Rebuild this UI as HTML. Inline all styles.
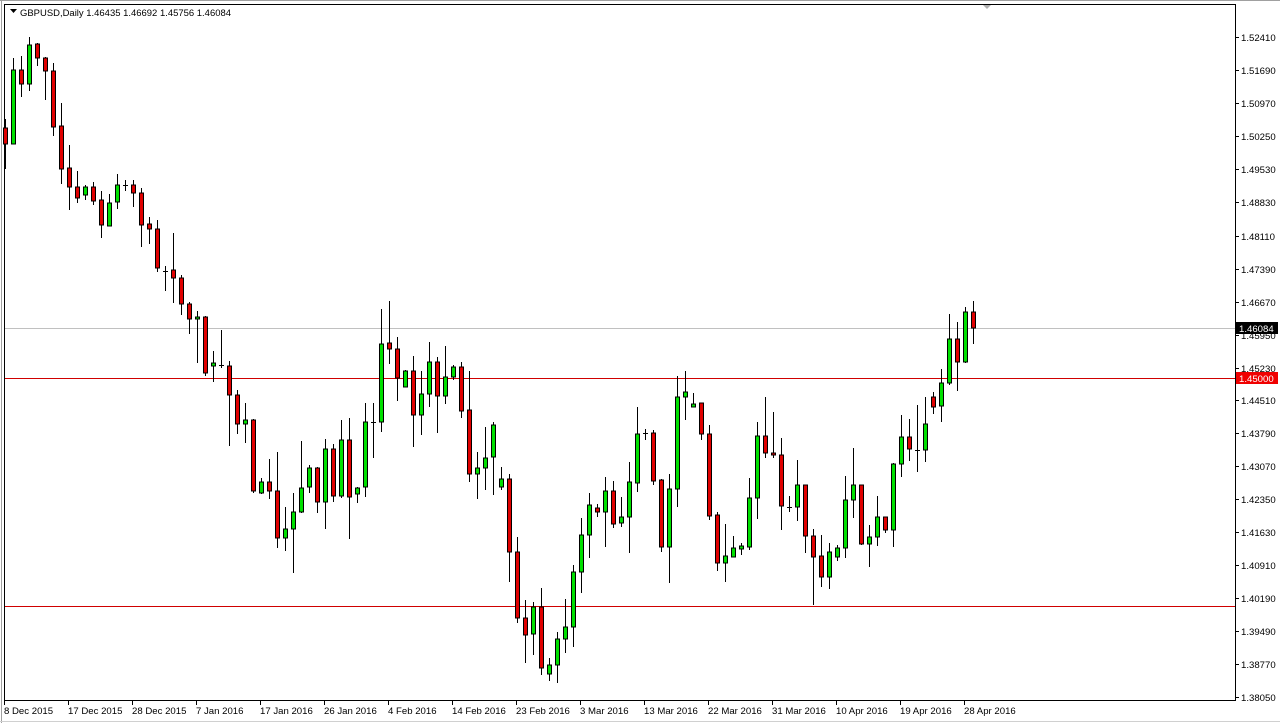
<!DOCTYPE html>
<html><head><meta charset="utf-8"><style>
html,body{margin:0;padding:0;background:#fff;}
svg{display:block;}
text{font-family:"Liberation Sans",sans-serif;font-size:9.6px;fill:#000;}
.g{fill:#00e000;stroke:#000;stroke-width:1}
.r{fill:#e00000;stroke:#000;stroke-width:1}
.d{fill:#000}
</style></head><body>
<svg width="1280" height="723" viewBox="0 0 1280 723" xmlns="http://www.w3.org/2000/svg">
<rect x="0" y="0" width="1280" height="723" fill="#fff"/>
<line x1="1.5" y1="0" x2="1.5" y2="723" stroke="#a0a0a0"/>
<line x1="0" y1="721.5" x2="1280" y2="721.5" stroke="#d0d0d0"/>
<line x1="0" y1="0.5" x2="1280" y2="0.5" stroke="#a0a0a0"/>
<path d="M4.5 4V700.5H1235.5V4.5H4" fill="none" stroke="#000"/>
<path d="M983 5l4 4l4-4z" fill="#b0b0b0"/>
<line x1="5" y1="328.5" x2="1235" y2="328.5" stroke="#c0c0c0"/>
<line x1="5" y1="378.5" x2="1235" y2="378.5" stroke="#d00000"/>
<line x1="5" y1="606.5" x2="1235" y2="606.5" stroke="#d00000"/>
<path d="M10 9h7l-3.5 4z" fill="#000"/>
<text x="20" y="16" textLength="211" lengthAdjust="spacingAndGlyphs">GBPUSD,Daily  1.46435 1.46692 1.45756 1.46084</text>
<path stroke="#000" stroke-width="1" fill="none" d="M5.5 119V169M13.5 58V144M21.5 56V97M29.5 37V91M37.5 43V66M45.5 57V100M53.5 63V136M61.5 103V184M69.5 145V210M77.5 171V203M85.5 185V200M93.5 182V205M101.5 191V238M109.5 194V226M117.5 174V209M125.5 180V191M133.5 180V207M141.5 188V247M149.5 217V244M157.5 220V272M165.5 266V291M173.5 233V303M181.5 275V315M189.5 302V334M197.5 311V363M205.5 316V376M213.5 351V382M221.5 330V368M229.5 361V446M237.5 390V434M245.5 403V443M253.5 419V493M261.5 478V494M269.5 459V499M277.5 452V548M285.5 507V551M293.5 493V573M301.5 441V513M309.5 465V493M317.5 467V513M325.5 439V529M333.5 444V502M341.5 420V498M349.5 418V539M357.5 487V503M365.5 403V497M373.5 403V458M381.5 309V432M389.5 301V364M397.5 337V401M405.5 370V387M413.5 356V447M421.5 371V435M429.5 342V407M437.5 357V433M445.5 346V404M453.5 365V380M461.5 362V418M469.5 371V482M477.5 452V499M485.5 427V490M493.5 422V495M501.5 467V490M509.5 474V582M517.5 537V623M525.5 600V663M533.5 602V655M541.5 588V675M549.5 658V681M557.5 632V683M565.5 599V653M573.5 565V647M581.5 518V593M589.5 493V558M597.5 504V517M605.5 477V547M613.5 481V528M621.5 497V527M629.5 462V553M637.5 407V492M645.5 429V440M653.5 430V485M661.5 479V552M669.5 474V583M677.5 376V507M685.5 371V420M693.5 393V407M701.5 403V440M709.5 425V520M717.5 512V571M725.5 524V582M733.5 536V557M741.5 543V555M749.5 478V550M757.5 422V519M765.5 397V458M773.5 412V458M781.5 438V530M789.5 496V512M797.5 460V521M805.5 485V553M813.5 529V605M821.5 535V587M829.5 543V589M837.5 545V561M845.5 476V558M853.5 448V518M861.5 485V545M869.5 525V567M877.5 496V546M885.5 517V533M893.5 463V547M901.5 415V477M909.5 419V461M917.5 405V472M925.5 397V462M933.5 392V414M941.5 369V422M949.5 314V385M957.5 322V391M965.5 307V363M973.5 301V344"/>
<g>
<rect class="r" x="3.5" y="128" width="4" height="16"/>
<rect class="g" x="11.5" y="70" width="4" height="74"/>
<rect class="r" x="19.5" y="70" width="4" height="14"/>
<rect class="g" x="27.5" y="45" width="4" height="39"/>
<rect class="r" x="35.5" y="44" width="4" height="14"/>
<rect class="r" x="43.5" y="58" width="4" height="13"/>
<rect class="r" x="51.5" y="71" width="4" height="56"/>
<rect class="r" x="59.5" y="126" width="4" height="43"/>
<rect class="r" x="67.5" y="168" width="4" height="19"/>
<rect class="r" x="75.5" y="187" width="4" height="11"/>
<rect class="g" x="83.5" y="187" width="4" height="8"/>
<rect class="r" x="91.5" y="187" width="4" height="14"/>
<rect class="r" x="99.5" y="200" width="4" height="25"/>
<rect class="g" x="107.5" y="203" width="4" height="23"/>
<rect class="g" x="115.5" y="185" width="4" height="17"/>
<rect class="d" x="123" y="185" width="5" height="1"/>
<rect class="r" x="131.5" y="185" width="4" height="8"/>
<rect class="r" x="139.5" y="193" width="4" height="32"/>
<rect class="r" x="147.5" y="224" width="4" height="5"/>
<rect class="r" x="155.5" y="229" width="4" height="39"/>
<rect class="d" x="163" y="271" width="5" height="1"/>
<rect class="r" x="171.5" y="270" width="4" height="8"/>
<rect class="r" x="179.5" y="278" width="4" height="26"/>
<rect class="r" x="187.5" y="304" width="4" height="15"/>
<rect class="g" x="195.5" y="317" width="4" height="2"/>
<rect class="r" x="203.5" y="317" width="4" height="56"/>
<rect class="g" x="211.5" y="363" width="4" height="3"/>
<rect class="d" x="219" y="365" width="5" height="1"/>
<rect class="r" x="227.5" y="366" width="4" height="29"/>
<rect class="r" x="235.5" y="395" width="4" height="29"/>
<rect class="g" x="243.5" y="420" width="4" height="4"/>
<rect class="r" x="251.5" y="420" width="4" height="71"/>
<rect class="g" x="259.5" y="482" width="4" height="11"/>
<rect class="r" x="267.5" y="482" width="4" height="9"/>
<rect class="r" x="275.5" y="491" width="4" height="47"/>
<rect class="g" x="283.5" y="529" width="4" height="9"/>
<rect class="g" x="291.5" y="512" width="4" height="17"/>
<rect class="g" x="299.5" y="488" width="4" height="24"/>
<rect class="g" x="307.5" y="468" width="4" height="19"/>
<rect class="r" x="315.5" y="468" width="4" height="34"/>
<rect class="g" x="323.5" y="449" width="4" height="53"/>
<rect class="r" x="331.5" y="449" width="4" height="47"/>
<rect class="g" x="339.5" y="440" width="4" height="56"/>
<rect class="r" x="347.5" y="440" width="4" height="57"/>
<rect class="g" x="355.5" y="488" width="4" height="6"/>
<rect class="g" x="363.5" y="422" width="4" height="65"/>
<rect class="d" x="371" y="422" width="5" height="1"/>
<rect class="g" x="379.5" y="344" width="4" height="78"/>
<rect class="r" x="387.5" y="343" width="4" height="6"/>
<rect class="r" x="395.5" y="349" width="4" height="29"/>
<rect class="g" x="403.5" y="371" width="4" height="16"/>
<rect class="r" x="411.5" y="371" width="4" height="44"/>
<rect class="g" x="419.5" y="394" width="4" height="21"/>
<rect class="g" x="427.5" y="362" width="4" height="32"/>
<rect class="r" x="435.5" y="362" width="4" height="34"/>
<rect class="g" x="443.5" y="377" width="4" height="19"/>
<rect class="g" x="451.5" y="367" width="4" height="10"/>
<rect class="r" x="459.5" y="367" width="4" height="44"/>
<rect class="r" x="467.5" y="410" width="4" height="64"/>
<rect class="g" x="475.5" y="468" width="4" height="6"/>
<rect class="g" x="483.5" y="458" width="4" height="10"/>
<rect class="g" x="491.5" y="425" width="4" height="32"/>
<rect class="g" x="499.5" y="479" width="4" height="8"/>
<rect class="r" x="507.5" y="479" width="4" height="73"/>
<rect class="r" x="515.5" y="552" width="4" height="66"/>
<rect class="r" x="523.5" y="618" width="4" height="17"/>
<rect class="g" x="531.5" y="607" width="4" height="27"/>
<rect class="r" x="539.5" y="607" width="4" height="61"/>
<rect class="g" x="547.5" y="665" width="4" height="9"/>
<rect class="g" x="555.5" y="639" width="4" height="26"/>
<rect class="g" x="563.5" y="627" width="4" height="12"/>
<rect class="g" x="571.5" y="572" width="4" height="55"/>
<rect class="g" x="579.5" y="535" width="4" height="37"/>
<rect class="g" x="587.5" y="505" width="4" height="30"/>
<rect class="r" x="595.5" y="508" width="4" height="4"/>
<rect class="g" x="603.5" y="491" width="4" height="21"/>
<rect class="r" x="611.5" y="491" width="4" height="33"/>
<rect class="g" x="619.5" y="517" width="4" height="6"/>
<rect class="g" x="627.5" y="482" width="4" height="35"/>
<rect class="g" x="635.5" y="434" width="4" height="49"/>
<rect class="d" x="643" y="433" width="5" height="1"/>
<rect class="r" x="651.5" y="433" width="4" height="48"/>
<rect class="r" x="659.5" y="480" width="4" height="67"/>
<rect class="g" x="667.5" y="489" width="4" height="58"/>
<rect class="g" x="675.5" y="397" width="4" height="92"/>
<rect class="g" x="683.5" y="392" width="4" height="5"/>
<rect class="g" x="691.5" y="404" width="4" height="3"/>
<rect class="r" x="699.5" y="403" width="4" height="31"/>
<rect class="r" x="707.5" y="434" width="4" height="82"/>
<rect class="r" x="715.5" y="515" width="4" height="48"/>
<rect class="g" x="723.5" y="556" width="4" height="7"/>
<rect class="g" x="731.5" y="548" width="4" height="9"/>
<rect class="g" x="739.5" y="546" width="4" height="3"/>
<rect class="g" x="747.5" y="498" width="4" height="49"/>
<rect class="g" x="755.5" y="436" width="4" height="62"/>
<rect class="r" x="763.5" y="436" width="4" height="17"/>
<rect class="r" x="771.5" y="453" width="4" height="2"/>
<rect class="r" x="779.5" y="455" width="4" height="51"/>
<rect class="d" x="787" y="507" width="5" height="1"/>
<rect class="g" x="795.5" y="485" width="4" height="22"/>
<rect class="r" x="803.5" y="485" width="4" height="51"/>
<rect class="r" x="811.5" y="536" width="4" height="21"/>
<rect class="r" x="819.5" y="556" width="4" height="21"/>
<rect class="g" x="827.5" y="552" width="4" height="25"/>
<rect class="g" x="835.5" y="548" width="4" height="9"/>
<rect class="g" x="843.5" y="500" width="4" height="48"/>
<rect class="g" x="851.5" y="485" width="4" height="15"/>
<rect class="r" x="859.5" y="485" width="4" height="59"/>
<rect class="g" x="867.5" y="537" width="4" height="7"/>
<rect class="g" x="875.5" y="517" width="4" height="20"/>
<rect class="r" x="883.5" y="517" width="4" height="13"/>
<rect class="g" x="891.5" y="464" width="4" height="66"/>
<rect class="g" x="899.5" y="437" width="4" height="27"/>
<rect class="r" x="907.5" y="437" width="4" height="12"/>
<rect class="d" x="915" y="450" width="5" height="1"/>
<rect class="g" x="923.5" y="424" width="4" height="26"/>
<rect class="r" x="931.5" y="397" width="4" height="10"/>
<rect class="g" x="939.5" y="383" width="4" height="23"/>
<rect class="g" x="947.5" y="339" width="4" height="44"/>
<rect class="r" x="955.5" y="339" width="4" height="23"/>
<rect class="g" x="963.5" y="312" width="4" height="50"/>
<rect class="r" x="971.5" y="312" width="4" height="16"/>
</g>
<path stroke="#000" d="M1235 37.5h4M1235 70.5h4M1235 103.5h4M1235 136.5h4M1235 169.5h4M1235 202.5h4M1235 236.5h4M1235 269.5h4M1235 302.5h4M1235 335.5h4M1235 368.5h4M1235 400.5h4M1235 433.5h4M1235 466.5h4M1235 499.5h4M1235 532.5h4M1235 565.5h4M1235 598.5h4M1235 631.5h4M1235 664.5h4M1235 697.5h4"/>
<g>
<text x="1241" y="41">1.52410</text>
<text x="1241" y="74">1.51690</text>
<text x="1241" y="107">1.50970</text>
<text x="1241" y="140">1.50250</text>
<text x="1241" y="173">1.49530</text>
<text x="1241" y="206">1.48830</text>
<text x="1241" y="240">1.48110</text>
<text x="1241" y="273">1.47390</text>
<text x="1241" y="306">1.46670</text>
<text x="1241" y="339">1.45950</text>
<text x="1241" y="372">1.45230</text>
<text x="1241" y="404">1.44510</text>
<text x="1241" y="437">1.43790</text>
<text x="1241" y="470">1.43070</text>
<text x="1241" y="503">1.42350</text>
<text x="1241" y="536">1.41630</text>
<text x="1241" y="569">1.40910</text>
<text x="1241" y="602">1.40190</text>
<text x="1241" y="635">1.39490</text>
<text x="1241" y="668">1.38770</text>
<text x="1241" y="701">1.38050</text>
</g>
<rect x="1236" y="322" width="42" height="12" fill="#000"/>
<text x="1239" y="332" style="fill:#fff">1.46084</text>
<rect x="1236" y="372" width="42" height="12" fill="#f00000"/>
<text x="1239" y="382" style="fill:#fff">1.45000</text>
<path stroke="#000" d="M4.5 700v5M68.5 700v5M132.5 700v5M196.5 700v5M260.5 700v5M324.5 700v5M388.5 700v5M452.5 700v5M516.5 700v5M580.5 700v5M644.5 700v5M708.5 700v5M772.5 700v5M836.5 700v5M900.5 700v5M964.5 700v5"/>
<g>
<text x="4" y="714">8 Dec 2015</text>
<text x="68" y="714">17 Dec 2015</text>
<text x="132" y="714">28 Dec 2015</text>
<text x="196" y="714">7 Jan 2016</text>
<text x="260" y="714">17 Jan 2016</text>
<text x="324" y="714">26 Jan 2016</text>
<text x="388" y="714">4 Feb 2016</text>
<text x="452" y="714">14 Feb 2016</text>
<text x="516" y="714">23 Feb 2016</text>
<text x="580" y="714">3 Mar 2016</text>
<text x="644" y="714">13 Mar 2016</text>
<text x="708" y="714">22 Mar 2016</text>
<text x="772" y="714">31 Mar 2016</text>
<text x="836" y="714">10 Apr 2016</text>
<text x="900" y="714">19 Apr 2016</text>
<text x="964" y="714">28 Apr 2016</text>
</g>
</svg>
</body></html>
